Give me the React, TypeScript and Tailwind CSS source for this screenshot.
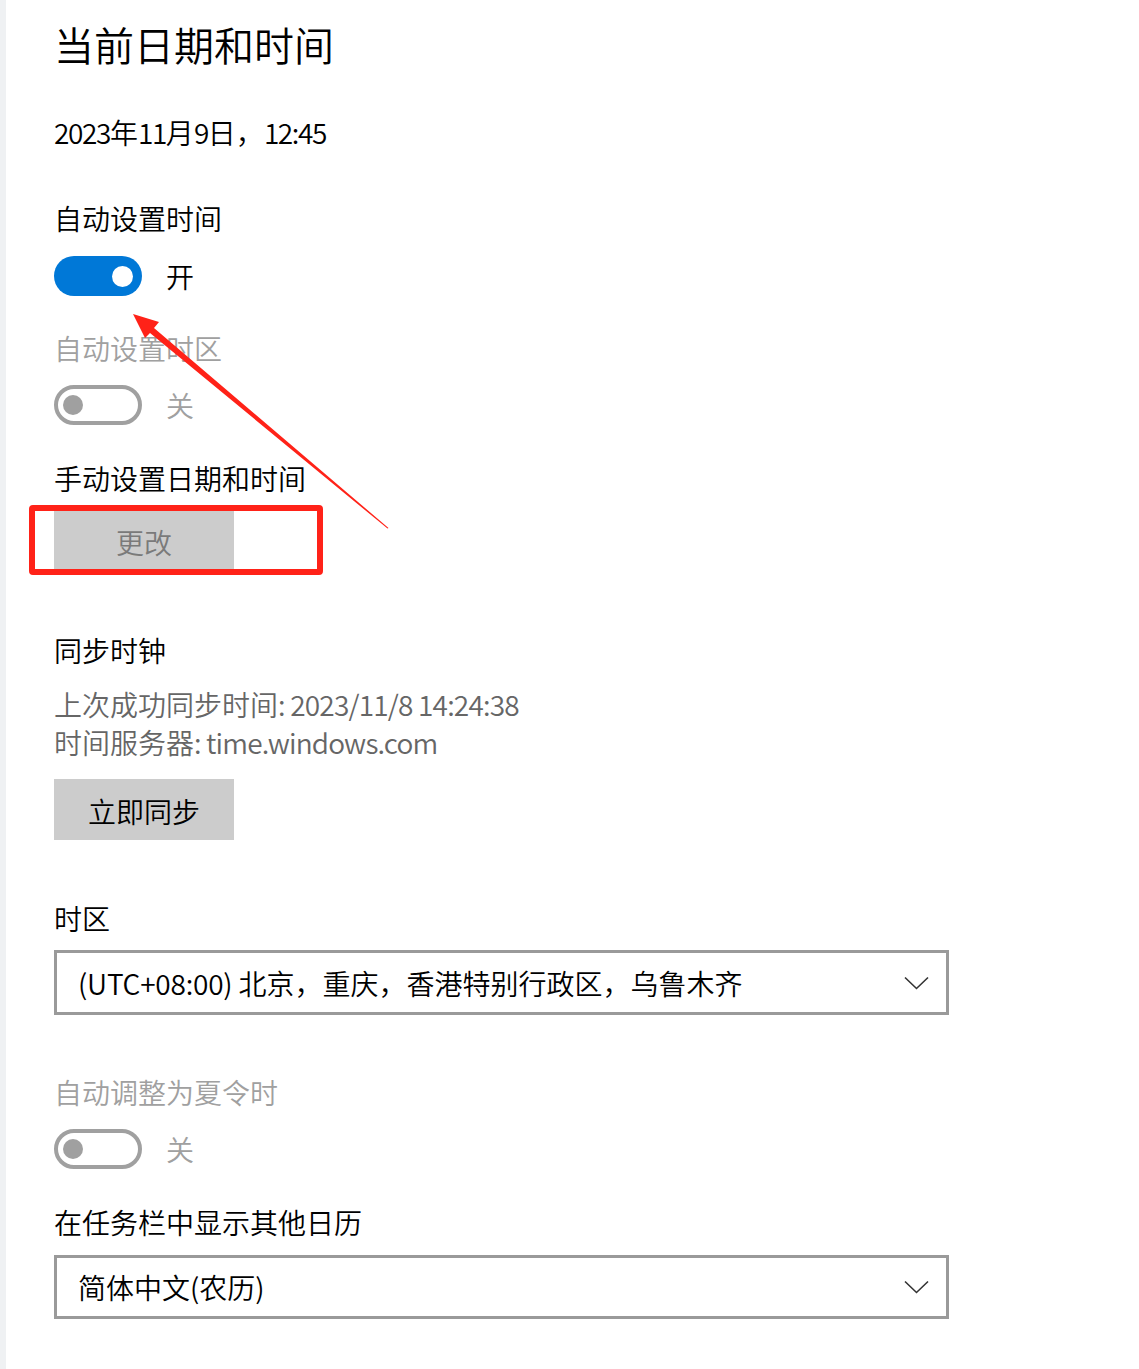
import React from "react";

const font = { fontFamily: '"Noto Sans CJK SC", "Noto Sans", sans-serif' };

function Label({ children, className = "" }: { children: React.ReactNode; className?: string }) {
  return <div className={`h-[40px] flex items-center text-[28px] leading-[40px] ${className}`}>{children}</div>;
}

function ToggleOn() {
  return (
    <div className="h-[40px] flex items-center">
      <div className="w-[88px] h-[40px] rounded-full bg-[#0078d7] relative flex items-center justify-end pr-[9px]">
        <div className="w-[21px] h-[21px] rounded-full bg-white" />
      </div>
      <span className="ml-[24px] text-[28px] leading-[40px] text-black">开</span>
    </div>
  );
}

function ToggleOff() {
  return (
    <div className="h-[40px] flex items-center">
      <div className="w-[88px] h-[40px] rounded-full border-[4px] border-[#a0a0a0] flex items-center pl-[5px]">
        <div className="w-[20px] h-[20px] rounded-full bg-[#a0a0a0]" />
      </div>
      <span className="ml-[24px] text-[28px] leading-[40px] text-[#a0a0a0]">关</span>
    </div>
  );
}

function Chevron() {
  return (
    <svg width="25" height="14" viewBox="0 0 25 14" fill="none">
      <path d="M1 1.5 L12.5 12.5 L24 1.5" stroke="#333" strokeWidth="1.6" />
    </svg>
  );
}

function Select({ children, h }: { children: React.ReactNode; h: string }) {
  return (
    <div className={`w-[895px] ${h} border-[3px] border-[#9a9a9a] flex items-center justify-between pl-[21px] pr-[17px]`}>
      <span className="text-[28px] text-black leading-[40px]">{children}</span>
      <Chevron />
    </div>
  );
}

export default function App() {
  return (
    <div className="relative w-[1139px] h-[1369px] bg-white flex overflow-hidden font-[350]" style={font}>
      <div className="w-[6px] h-full bg-[#eff1f3] shrink-0" />
      <div className="pl-[48px] pt-[16px] flex flex-col text-black">
        <div className="h-[56px] flex items-center text-[40px] leading-[56px]">当前日期和时间</div>
        <Label className="mt-[40px]">
          <span className="tracking-[-1.4px]">2023</span>年<span className="tracking-[-1.4px]">11</span>月<span className="tracking-[-1.4px]">9</span>日，<span className="tracking-[-1.4px]">12:45</span>
        </Label>
        <Label className="mt-[46px]">自动设置时间</Label>
        <div className="mt-[18px]"><ToggleOn /></div>
        <Label className="mt-[32px] text-[#a0a0a0]">自动设置时区</Label>
        <div className="mt-[17px]"><ToggleOff /></div>
        <Label className="mt-[33px]">手动设置日期和时间</Label>
        <div className="mt-[12px] w-[180px] h-[59px] bg-[#cccccc] flex items-center justify-center pt-[5px] text-[28px] text-[#7a7a7a]">更改</div>
        <Label className="mt-[61px]">同步时钟</Label>
        <div className="mt-[15px] h-[38px] flex items-center text-[28px] text-[#666666]">
          上次成功同步时间<span className="tracking-[-0.8px]">: 2023/11/8 14:24:38</span>
        </div>
        <div className="h-[38px] flex items-center text-[28px] text-[#666666]">
          时间服务器<span className="tracking-[-0.85px]">: time.windows.com</span>
        </div>
        <div className="mt-[18px] w-[180px] h-[61px] bg-[#cccccc] flex items-center justify-center pt-[2px] text-[28px] text-black">立即同步</div>
        <Label className="mt-[58px]">时区</Label>
        <div className="mt-[12px]">
          <Select h="h-[65px]">
            <span className="tracking-[-0.2px]">(UTC+08:00) </span>北京，重庆，香港特别行政区，乌鲁木齐
          </Select>
        </div>
        <Label className="mt-[57px] text-[#a0a0a0]">自动调整为夏令时</Label>
        <div className="mt-[17px]"><ToggleOff /></div>
        <Label className="mt-[33px]">在任务栏中显示其他日历</Label>
        <div className="mt-[13px]">
          <Select h="h-[64px]">
            简体中文(农历)
          </Select>
        </div>
      </div>

      {/* annotation: red rectangle */}
      <div className="absolute left-[29px] top-[505px] w-[294px] h-[70px] border-[6.5px] border-[#ff2218] rounded-[4px]" />
      {/* annotation: red arrow */}
      <svg className="absolute left-0 top-0" width="1139" height="1369" viewBox="0 0 1139 1369">
        <polygon
          points="133,314 159,322 154,328 388.5,528 387.5,528.6 150,333 145,338"
          fill="#ff2218"
        />
      </svg>
    </div>
  );
}
